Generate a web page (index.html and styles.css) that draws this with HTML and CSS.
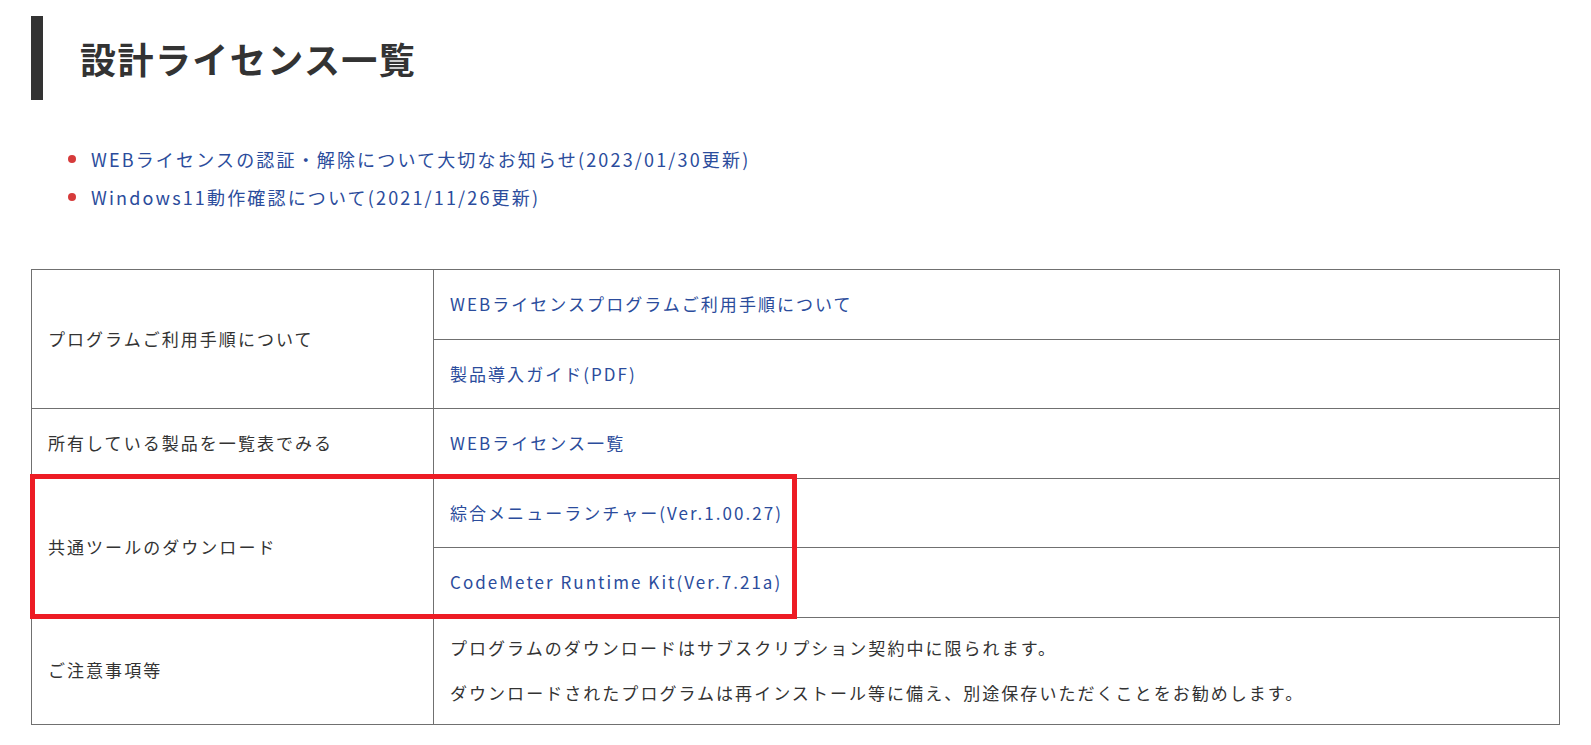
FILE: index.html
```html
<!DOCTYPE html>
<html lang="ja">
<head>
<meta charset="utf-8">
<title>設計ライセンス一覧</title>
<link rel="stylesheet" href="styles.css">
</head>
<body>
<main class="page">
  <h1 class="page-title">設計ライセンス一覧</h1>
  <ul class="notice-list">
    <li><a href="#">WEBライセンスの認証・解除について大切なお知らせ(2023/01/30更新)</a></li>
    <li><a href="#">Windows11動作確認について(2021/11/26更新)</a></li>
  </ul>
  <div class="table-wrap">
    <table class="license-table">
      <tr>
        <th rowspan="2">プログラムご利用手順について</th>
        <td><a href="#">WEBライセンスプログラムご利用手順について</a></td>
      </tr>
      <tr>
        <td><a href="#">製品導入ガイド(PDF)</a></td>
      </tr>
      <tr>
        <th>所有している製品を一覧表でみる</th>
        <td><a href="#">WEBライセンス一覧</a></td>
      </tr>
      <tr>
        <th rowspan="2">共通ツールのダウンロード</th>
        <td><a href="#">綜合メニューランチャー(Ver.1.00.27)</a></td>
      </tr>
      <tr>
        <td><a href="#">CodeMeter Runtime Kit(Ver.7.21a)</a></td>
      </tr>
      <tr class="note-row">
        <th>ご注意事項等</th>
        <td>
          <p>プログラムのダウンロードはサブスクリプション契約中に限られます。</p>
          <p>ダウンロードされたプログラムは再インストール等に備え、別途保存いただくことをお勧めします。</p>
        </td>
      </tr>
    </table>
    <div class="highlight-box"></div>
  </div>
</main>
</body>
</html>
```

FILE: styles.css
```css
* { box-sizing: border-box; }

html, body {
  margin: 0;
  padding: 0;
  background: #fff;
}

body {
  font-family: "Noto Sans CJK JP", "Noto Sans", sans-serif;
  color: #333;
}

.page {
  padding: 16px 31px 20px 31px;
}

.page-title {
  margin: 0;
  height: 84px;
  display: flex;
  align-items: center;
  border-left: 12px solid #333;
  padding-left: 37px;
  font-size: 36px;
  font-weight: 700;
  letter-spacing: 0.04em;
  color: #333;
}

.notice-list {
  list-style: none;
  margin: 40px 0 53px 0;
  padding: 0 0 0 37px;
}

.notice-list li {
  display: flex;
  align-items: center;
  height: 38px;
  font-size: 18px;
  letter-spacing: 0.12em;
}

.notice-list li::before {
  content: "";
  width: 8px;
  height: 8px;
  border-radius: 50%;
  background: #d63b3b;
  margin-right: 15px;
  flex: none;
}

a {
  color: #2b4c9c;
  text-decoration: none;
}

.table-wrap {
  position: relative;
}

.license-table {
  width: 100%;
  border-collapse: collapse;
  font-size: 17px;
  letter-spacing: 0.12em;
  line-height: 28.5px;
}

.license-table th,
.license-table td {
  border: 1px solid #707070;
  padding: 20px 16px;
  text-align: left;
  vertical-align: middle;
  font-weight: 400;
}

.license-table th {
  width: 402px;
}

.license-table .note-row th,
.license-table .note-row td {
  padding-top: 16.5px;
  padding-bottom: 16.5px;
}

.license-table p {
  margin: 0;
}

.license-table p + p {
  margin-top: 16px;
}

.highlight-box {
  position: absolute;
  left: -1px;
  top: 205px;
  width: 767px;
  height: 145px;
  border: 5px solid #ed1c24;
  pointer-events: none;
}
```
